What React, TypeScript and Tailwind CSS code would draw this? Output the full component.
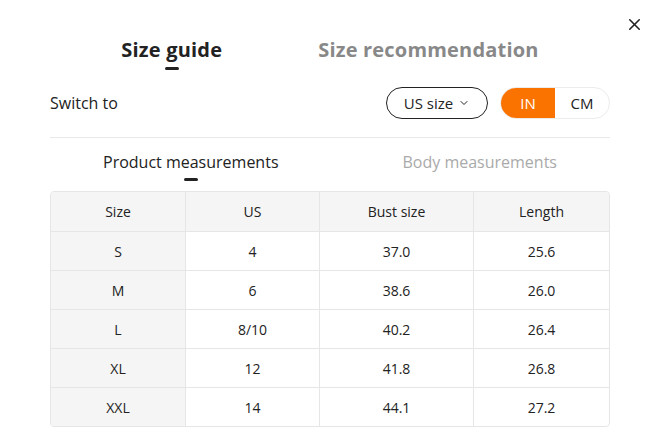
import { X, ChevronDown } from 'lucide-react'

const rows = [
  ['S', '4', '37.0', '25.6'],
  ['M', '6', '38.6', '26.0'],
  ['L', '8/10', '40.2', '26.4'],
  ['XL', '12', '41.8', '26.8'],
  ['XXL', '14', '44.1', '27.2'],
]

const cols = ['w-[135px]', 'w-[134px]', 'w-[154px]', 'flex-1']

export default function App() {
  return (
    <div
      className="relative w-[654px] h-[431px] bg-white text-[#222] overflow-hidden"
      style={{ fontFamily: '"Open Sans", "Noto Sans", sans-serif' }}
    >
      {/* close */}
      <button className="absolute right-[10px] top-[15px] text-[#222]">
        <X size={19} strokeWidth={2} />
      </button>

      <div className="pl-[50px] pr-[44px]">
        {/* main tabs */}
        <div className="flex justify-center gap-[96px] pt-[35px]">
          <div className="flex flex-col items-center">
            <span className="text-[20px] font-bold leading-[30px] tracking-[0.2px]">Size guide</span>
            <span className="mt-[2px] w-[14px] h-[3px] rounded-full bg-[#222]" />
          </div>
          <div className="flex flex-col items-center">
            <span className="text-[20px] font-bold leading-[30px] tracking-[0.2px] text-[#888]">Size recommendation</span>
          </div>
        </div>

        {/* switch row */}
        <div className="flex items-center justify-between mt-[17px] pb-[18px] border-b border-[#e8e8e8]">
          <span className="text-[16px]">Switch to</span>
          <div className="flex items-center gap-[12px]">
            <button className="flex items-center gap-[5px] h-[32px] w-[102px] justify-center rounded-full border border-[#222] text-[15px]">
              US size
              <ChevronDown size={12} strokeWidth={2} />
            </button>
            <div className="flex h-[32px] w-[110px] rounded-full border border-[#ececec] overflow-hidden text-[15px]">
              <span className="flex-1 flex items-center justify-center bg-[#fa7300] text-white">IN</span>
              <span className="flex-1 flex items-center justify-center">CM</span>
            </div>
          </div>
        </div>

        {/* sub tabs */}
        <div className="flex justify-between px-[53px] mt-[12px]">
          <div className="flex flex-col items-center">
            <span className="text-[16px] leading-[24px]">Product measurements</span>
            <span className="mt-[4px] w-[14px] h-[3px] rounded-full bg-[#222]" />
          </div>
          <div className="flex flex-col items-center">
            <span className="text-[16px] leading-[24px] text-[#aaa]">Body measurements</span>
          </div>
        </div>

        {/* table */}
        <div className="mt-[10px] border border-[#e6e6e6] rounded-[4px] overflow-hidden text-[14px]">
          <div className="flex h-[39px] bg-[#f5f5f5]">
            {['Size', 'US', 'Bust size', 'Length'].map((h, i) => (
              <div
                key={h}
                className={`${cols[i]} flex items-center justify-center ${i < 3 ? 'border-r border-[#e6e6e6]' : ''}`}
              >
                {h}
              </div>
            ))}
          </div>
          {rows.map(r => (
            <div key={r[0]} className="flex h-[39px] border-t border-[#e6e6e6]">
              {r.map((c, i) => (
                <div
                  key={i}
                  className={`${cols[i]} flex items-center justify-center ${i === 0 ? 'bg-[#f5f5f5]' : ''} ${i < 3 ? 'border-r border-[#e6e6e6]' : ''}`}
                >
                  {c}
                </div>
              ))}
            </div>
          ))}
        </div>
      </div>
    </div>
  )
}
